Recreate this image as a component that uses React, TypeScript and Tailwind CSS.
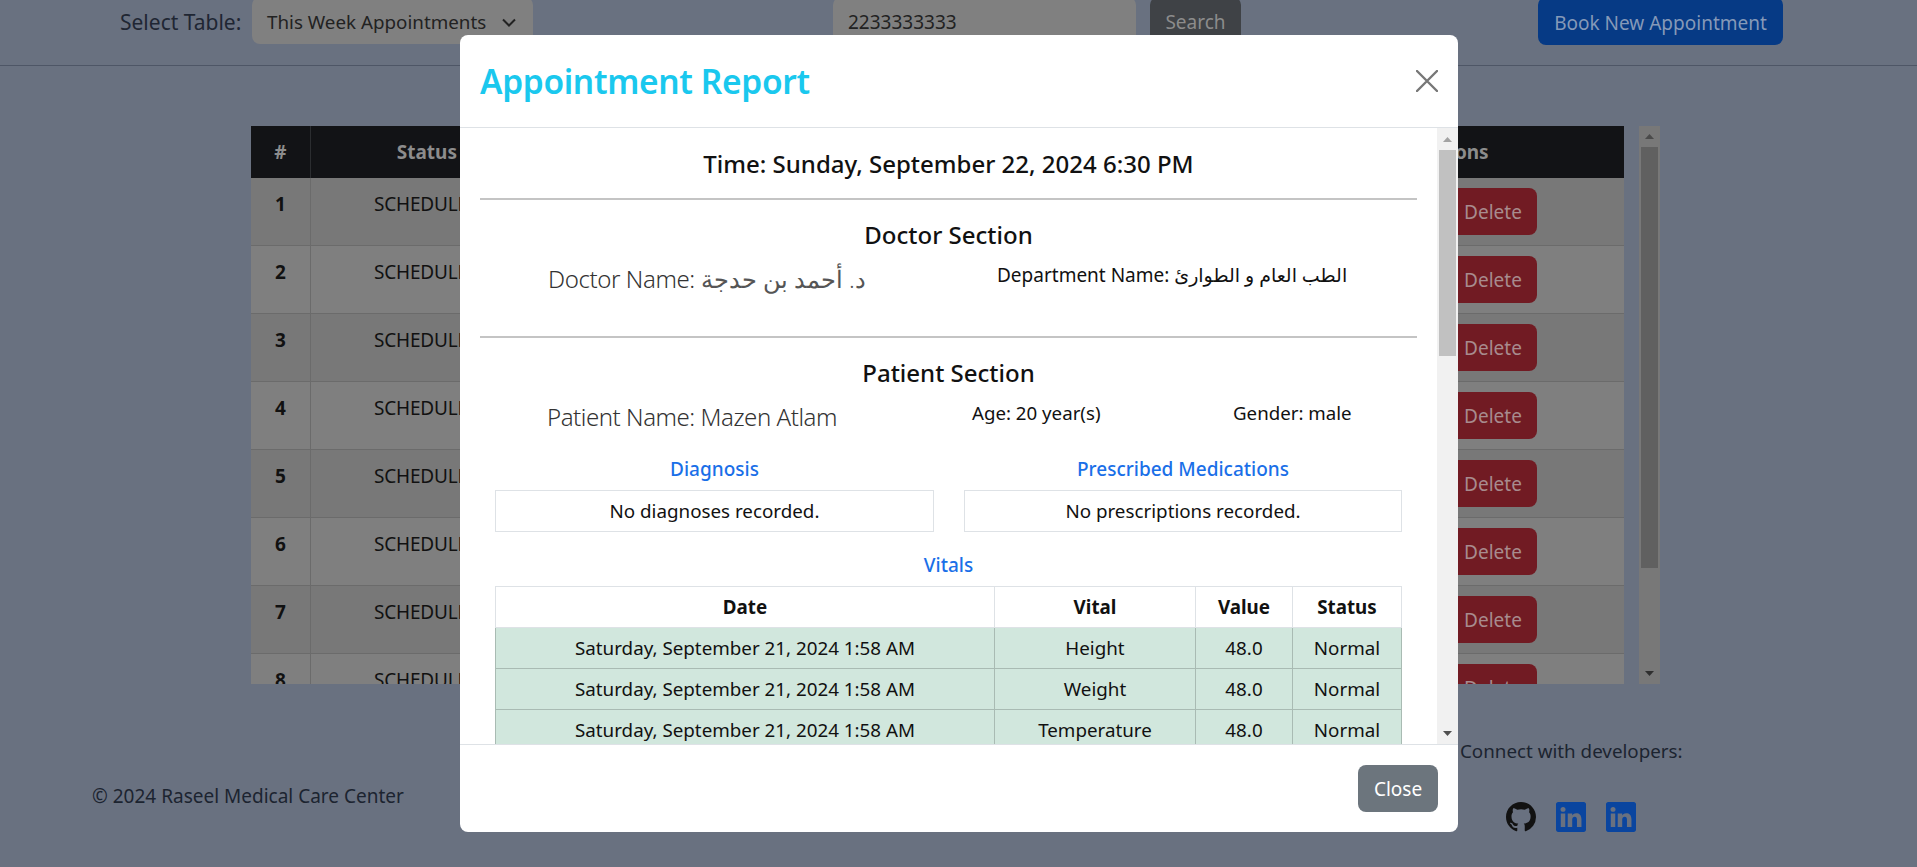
import { BsGithub, BsLinkedin } from "react-icons/bs";

const font = "font-['Noto_Sans','DejaVu_Sans',sans-serif]";

const rows = [1, 2, 3, 4, 5, 6, 7, 8];

const vitals = [
  { date: "Saturday, September 21, 2024 1:58 AM", vital: "Height", value: "48.0", status: "Normal" },
  { date: "Saturday, September 21, 2024 1:58 AM", vital: "Weight", value: "48.0", status: "Normal" },
  { date: "Saturday, September 21, 2024 1:58 AM", vital: "Temperature", value: "48.0", status: "Normal" },
  { date: "Saturday, September 21, 2024 1:58 AM", vital: "Heart Rate", value: "48.0", status: "Normal" },
];

function Triangle({ up, className }: { up?: boolean; className: string }) {
  return (
    <svg width="9" height="5" viewBox="0 0 9 5" className={className}>
      <path d={up ? "M4.5 0L9 5H0z" : "M0 0h9L4.5 5z"} fill="currentColor" />
    </svg>
  );
}

function BackgroundTable() {
  return (
    <div className="mt-[60px] ml-[251px] flex h-[558px] w-[1409px] gap-[15px]">
      <div className="w-[1373px] overflow-hidden">
        <div className="flex h-[52px] bg-[#121316] text-[19px] font-bold text-[#8c8c8c]">
          <div className="flex w-[60px] items-center justify-center border-r border-[#2b2d30]">#</div>
          <div className="flex w-[172px] items-center justify-end pr-[26px]">Status</div>
          <div className="flex-1" />
          <div className="flex w-[240px] items-center pl-[34px]">Actions</div>
        </div>
        {rows.map((n) => (
          <div
            key={n}
            className={`flex h-[68px] shrink-0 border-b border-[#6b6b6b] text-[19px] text-[#111] ${n % 2 ? "bg-[#787878]" : "bg-[#7f7f7f]"}`}
          >
            <div className="w-[60px] border-r border-[#6b6b6b] pt-[12px] text-center font-bold">{n}</div>
            <div className="w-[172px] pt-[12px] pl-[63px] tracking-[-0.2px] whitespace-nowrap">SCHEDULED</div>
            <div className="flex-1" />
            <div className="w-[240px] pt-[10px]">
              <button className="ml-[65px] h-[47px] w-[88px] rounded-lg bg-[#711b23] pt-[2px] text-[19px] text-[#a88b8e]">Delete</button>
            </div>
          </div>
        ))}
      </div>
      <div className="flex h-full w-[21px] flex-col bg-[#787878]">
        <div className="flex h-[21px] items-center justify-center text-[#4a4a4a]">
          <Triangle up className="" />
        </div>
        <div className="mx-[2px] h-[421px] bg-[#606060]" />
        <div className="flex-1" />
        <div className="flex h-[21px] items-center justify-center text-[#2f2f2f]">
          <Triangle className="" />
        </div>
      </div>
    </div>
  );
}

function ReportModal() {
  return (
    <div className="absolute top-[35px] left-[460px] flex h-[797px] w-[998px] flex-col overflow-hidden rounded-lg bg-white">
      <div className="flex h-[93px] shrink-0 items-center justify-between border-b border-[#dee2e6] pr-[20px] pl-[20px]">
        <h1 className="mt-[1px] text-[33.5px] font-semibold tracking-[-0.35px] text-[#1ac8ee]">Appointment Report</h1>
        <svg width="22" height="22" viewBox="0 0 22 22" className="text-[#777]">
          <path d="M1 1l20 20M21 1L1 21" stroke="currentColor" strokeWidth="2.4" strokeLinecap="round" />
        </svg>
      </div>
      <div className="flex min-h-0 flex-1">
        <div className="min-w-0 flex-1 overflow-hidden px-[20px] text-[#111]">
          <h2 className="pt-[17px] text-center text-[24px] leading-[38px] font-medium">
            Time: Sunday, September 22, 2024 6:30 PM
          </h2>
          <div className="mt-[15px] border-t-2 border-[#c4c4c4]" />
          <h3 className="mt-[17px] text-center text-[24px] leading-[36px] font-medium">Doctor Section</h3>
          <div className="relative h-[83px]">
            <p className="absolute top-[8px] left-[68px] text-[24px] leading-[36px] font-light tracking-[-0.4px] whitespace-nowrap text-[#333]">
              Doctor Name: <span className="text-[23.5px] text-[#555]">د. أحمد بن حدجة</span>
            </p>
            <p className="absolute top-[8px] left-[517px] text-[19px] leading-[28px] whitespace-nowrap">
              Department Name: الطب العام و الطوارئ
            </p>
          </div>
          <div className="border-t-2 border-[#c4c4c4]" />
          <h3 className="mt-[17px] text-center text-[24px] leading-[36px] font-medium">Patient Section</h3>
          <div className="relative h-[64px]">
            <p className="absolute top-[8px] left-[67px] text-[24px] leading-[36px] font-light tracking-[-0.45px] whitespace-nowrap text-[#333]">
              Patient Name: Mazen Atlam
            </p>
            <p className="absolute top-[8px] left-[492px] text-[18.7px] leading-[28px] whitespace-nowrap">Age: 20 year(s)</p>
            <p className="absolute top-[8px] left-[753px] text-[18.7px] leading-[28px] whitespace-nowrap">Gender: male</p>
          </div>
          <div className="mx-[15px] grid grid-cols-[439px_438px] gap-[30px]">
            <div>
              <h4 className="text-center text-[19px] leading-[28px] font-medium text-[#1a6fe8]">Diagnosis</h4>
              <div className="mt-[7px] flex h-[42px] items-center justify-center border border-[#dee2e6] text-[18.8px]">
                No diagnoses recorded.
              </div>
            </div>
            <div>
              <h4 className="text-center text-[19px] leading-[28px] font-medium text-[#1a6fe8]">Prescribed Medications</h4>
              <div className="mt-[7px] flex h-[42px] items-center justify-center border border-[#dee2e6] text-[18.8px]">
                No prescriptions recorded.
              </div>
            </div>
          </div>
          <h4 className="mt-[19px] text-center text-[19px] leading-[28px] font-medium text-[#1a6fe8]">Vitals</h4>
          <table className="mx-[15px] mt-[7px] w-[906px] table-fixed border-collapse text-[18.8px]">
            <colgroup>
              <col className="w-[499px]" />
              <col className="w-[201px]" />
              <col className="w-[97px]" />
              <col className="w-[109px]" />
            </colgroup>
            <thead>
              <tr className="h-[41px]">
                {["Date", "Vital", "Value", "Status"].map((h) => (
                  <th key={h} className="border border-[#dee2e6] font-bold">
                    {h}
                  </th>
                ))}
              </tr>
            </thead>
            <tbody>
              {vitals.map((v) => (
                <tr key={v.vital} className="h-[41px] bg-[#d1e7dd]">
                  <td className="border border-[#a9bbb3] text-center">{v.date}</td>
                  <td className="border border-[#a9bbb3] text-center">{v.vital}</td>
                  <td className="border border-[#a9bbb3] text-center">{v.value}</td>
                  <td className="border border-[#a9bbb3] text-center">{v.status}</td>
                </tr>
              ))}
            </tbody>
          </table>
        </div>
        <div className="flex w-[21px] shrink-0 flex-col bg-[#f1f1f1]">
          <div className="flex h-[22px] items-center justify-center text-[#a3a3a3]">
            <Triangle up className="" />
          </div>
          <div className="mx-[2px] h-[206px] bg-[#c1c1c1]" />
          <div className="flex-1" />
          <div className="flex h-[21px] items-center justify-center text-[#505050]">
            <Triangle className="" />
          </div>
        </div>
      </div>
      <div className="flex h-[88px] shrink-0 items-start justify-end border-t border-[#dee2e6] pt-[20px] pr-[20px]">
        <button className="h-[47px] w-[80px] rounded-lg bg-[#6c757d] pt-[2px] text-[19px] text-white">Close</button>
      </div>
    </div>
  );
}

export default function App() {
  return (
    <div className={`relative h-[867px] w-full overflow-hidden bg-[#697180] ${font}`}>
      <header className="relative flex h-[66px] items-start border-b border-[#4e5666] text-[19px]">
        <span className="mt-[7px] ml-[120px] w-[132px] text-[21px] leading-[30px] whitespace-nowrap text-[#1f2633]">Select Table:</span>
        <div className="-mt-[3px] flex h-[47px] w-[281px] items-center justify-between rounded-lg bg-[#808080] pt-[4px] pr-[17px] pl-[15px] text-[#222]">
          <span className="text-[18.8px]">This Week Appointments</span>
          <svg width="14" height="10" viewBox="0 0 14 10" className="text-[#222]">
            <path d="M1 1.5l6 6 6-6" fill="none" stroke="currentColor" strokeWidth="2" />
          </svg>
        </div>
        <div className="-mt-[3px] ml-[300px] flex h-[47px] w-[303px] items-center rounded-lg bg-[#808080] pt-[4px] pl-[15px] text-[#222]">2233333333</div>
        <button className="-mt-[3px] ml-[14px] h-[47px] w-[91px] rounded-lg bg-[#3f4246] pt-[4px] text-[#8c8c8c]">Search</button>
        <button className="-mt-[3px] ml-[297px] h-[48px] w-[245px] rounded-lg bg-[#063a85] pt-[4px] text-[#8599b8]">Book New Appointment</button>
      </header>
      <BackgroundTable />
      <ReportModal />
      <span className="absolute top-[782px] left-[92px] text-[19px] leading-[28px] text-[#1c2430]">© 2024 Raseel Medical Care Center</span>
      <span className="absolute top-[737px] left-[1460px] text-[18.8px] leading-[28px] text-[#1c2430]">Connect with developers:</span>
      <div className="absolute top-[802px] left-[1506px] flex gap-[20px]">
        <BsGithub className="h-[30px] w-[30px] text-[#121212]" />
        <BsLinkedin className="h-[30px] w-[30px] text-[#0a459f]" />
        <BsLinkedin className="h-[30px] w-[30px] text-[#0a459f]" />
      </div>
    </div>
  );
}
